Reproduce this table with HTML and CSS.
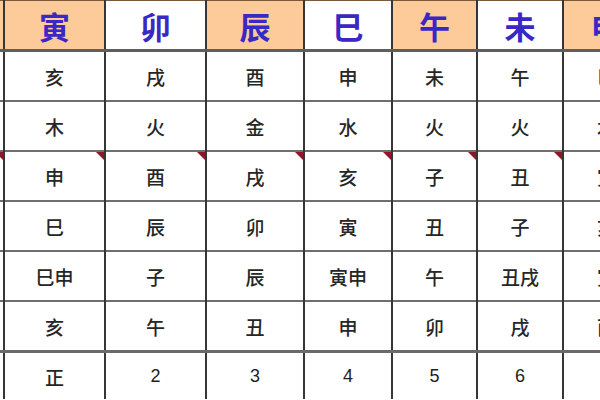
FILE: index.html
```html
<!DOCTYPE html>
<html lang="zh">
<head>
<meta charset="utf-8">
<title>月建表</title>
<link rel="stylesheet" href="styles.css">
</head>
<body>
<div class="frame">
<table class="grid">
  <colgroup>
    <col class="c0"><col class="c1"><col class="c2"><col class="c3"><col class="c4"><col class="c5"><col class="c6"><col class="c7">
  </colgroup>
  <tr class="head">
    <th class="hot"></th>
    <th class="hot">寅</th>
    <th>卯</th>
    <th class="hot">辰</th>
    <th>巳</th>
    <th class="hot">午</th>
    <th>未</th>
    <th class="hot">申</th>
  </tr>
  <tr class="r1">
    <td></td><td>亥</td><td>戌</td><td>酉</td><td>申</td><td>未</td><td>午</td><td>巳</td>
  </tr>
  <tr class="r2">
    <td></td><td>木</td><td>火</td><td>金</td><td>水</td><td>火</td><td>火</td><td>木</td>
  </tr>
  <tr class="r3 noted">
    <td></td><td>申</td><td>酉</td><td>戌</td><td>亥</td><td>子</td><td>丑</td><td>寅</td>
  </tr>
  <tr class="r4">
    <td></td><td>巳</td><td>辰</td><td>卯</td><td>寅</td><td>丑</td><td>子</td><td>亥</td>
  </tr>
  <tr class="r5">
    <td></td><td>巳申</td><td>子</td><td>辰</td><td>寅申</td><td>午</td><td>丑戌</td><td>寅</td>
  </tr>
  <tr class="r6">
    <td></td><td>亥</td><td>午</td><td>丑</td><td>申</td><td>卯</td><td>戌</td><td>酉</td>
  </tr>
  <tr class="r7">
    <td></td><td>正</td><td class="num">2</td><td class="num">3</td><td class="num">4</td><td class="num">5</td><td class="num">6</td><td class="num">7</td>
  </tr>
</table>
</div>
</body>
</html>
```
FILE: styles.css
```css
html, body {
  margin: 0;
  padding: 0;
  background: #ffffff;
}

.frame {
  width: 600px;
  height: 400px;
  overflow: hidden;
  background: #ffffff;
}

.grid {
  border-collapse: collapse;
  table-layout: fixed;
  width: 649px;
  font-family: "Noto Sans CJK SC", "Noto Sans CJK TC", sans-serif;
}

.c0 { width: 4px; }
.c1 { width: 101px; }
.c2 { width: 101px; }
.c3 { width: 98px; }
.c4 { width: 88px; }
.c5 { width: 85px; }
.c6 { width: 86px; }
.c7 { width: 86px; }

.grid th,
.grid td {
  padding: 0;
  text-align: center;
  vertical-align: middle;
  border-left: 2px solid #363636;
  border-top: 2px solid #6f6f6f;
  overflow: hidden;
  white-space: nowrap;
  position: relative;
}

.grid th:first-child,
.grid td:first-child {
  border-left: none;
}

.head th {
  height: 48px;
  border-top: 1px solid #7a5a3c;
  font-size: 31px;
  font-weight: 700;
  line-height: 1;
  color: #3a28c4;
  background: #ffffff;
}

.head th.hot {
  background: #fdca9a;
}

.grid td {
  height: 48px;
  font-size: 19px;
  font-weight: 500;
  line-height: 1;
  color: #262626;
}

.r1 td { border-top: 3px solid #5e5e5e; }
.r7 td { border-top: 3px solid #6a6a6a; height: 46px; }

.grid td.num {
  font-family: "Liberation Sans", "Noto Sans", sans-serif;
  font-size: 18px;
  font-weight: 400;
  color: #222222;
}

.noted td::after {
  content: "";
  position: absolute;
  top: 0;
  right: 0;
  width: 0;
  height: 0;
  border-top: 8px solid #8e1626;
  border-left: 8px solid transparent;
}
```
